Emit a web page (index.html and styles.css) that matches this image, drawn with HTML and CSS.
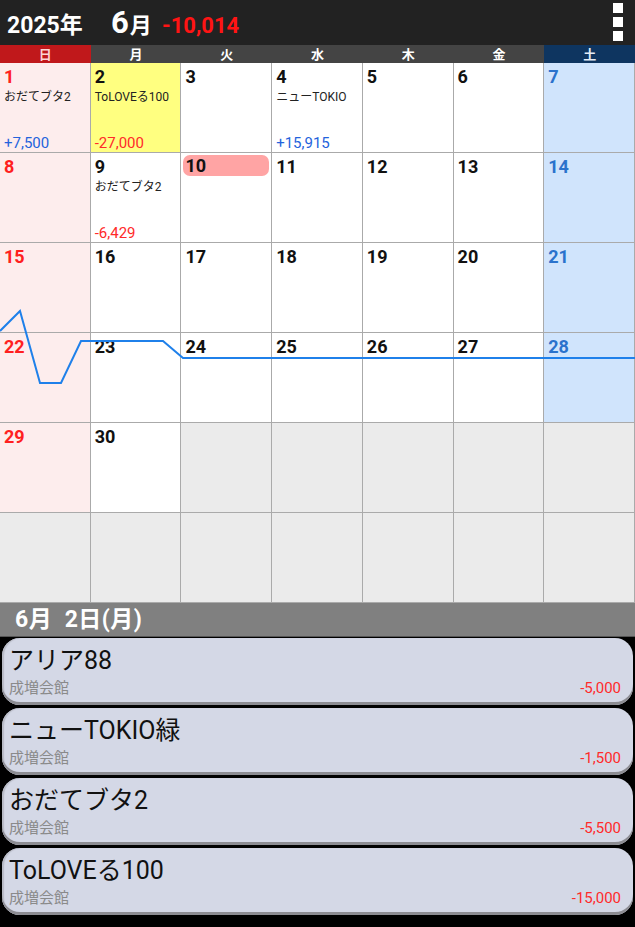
FILE: index.html
```html
<!DOCTYPE html>
<html lang="ja">
<head>
<meta charset="utf-8">
<link rel="stylesheet" href="styles.css">
</head>
<body>
<div class="app">
  <header class="topbar">
    <span class="year">2025年</span>
    <span class="month"><span class="mnum">6</span>月</span>
    <span class="total">-10,014</span>
    <div class="menu"><i></i><i></i><i></i></div>
  </header>
  <div class="weekdays">
    <div class="wd sun">日</div><div class="wd">月</div><div class="wd">火</div><div class="wd">水</div><div class="wd">木</div><div class="wd">金</div><div class="wd sat">土</div>
  </div>
  <div class="cal">
    <div class="cell sun"><span class="num">1</span><span class="ev">おだてブタ2</span><span class="amt plus">+7,500</span></div>
    <div class="cell sel"><span class="num">2</span><span class="ev">ToLOVEる100</span><span class="amt minus">-27,000</span></div>
    <div class="cell"><span class="num">3</span></div>
    <div class="cell"><span class="num">4</span><span class="ev">ニューTOKIO</span><span class="amt plus">+15,915</span></div>
    <div class="cell"><span class="num">5</span></div>
    <div class="cell"><span class="num">6</span></div>
    <div class="cell sat"><span class="num">7</span></div>

    <div class="cell sun"><span class="num">8</span></div>
    <div class="cell"><span class="num">9</span><span class="ev">おだてブタ2</span><span class="amt minus">-6,429</span></div>
    <div class="cell"><span class="num today">10</span></div>
    <div class="cell"><span class="num">11</span></div>
    <div class="cell"><span class="num">12</span></div>
    <div class="cell"><span class="num">13</span></div>
    <div class="cell sat"><span class="num">14</span></div>

    <div class="cell sun"><span class="num">15</span></div>
    <div class="cell"><span class="num">16</span></div>
    <div class="cell"><span class="num">17</span></div>
    <div class="cell"><span class="num">18</span></div>
    <div class="cell"><span class="num">19</span></div>
    <div class="cell"><span class="num">20</span></div>
    <div class="cell sat"><span class="num">21</span></div>

    <div class="cell sun"><span class="num">22</span></div>
    <div class="cell"><span class="num">23</span></div>
    <div class="cell"><span class="num">24</span></div>
    <div class="cell"><span class="num">25</span></div>
    <div class="cell"><span class="num">26</span></div>
    <div class="cell"><span class="num">27</span></div>
    <div class="cell sat"><span class="num">28</span></div>

    <div class="cell sun"><span class="num">29</span></div>
    <div class="cell"><span class="num">30</span></div>
    <div class="cell empty"></div>
    <div class="cell empty"></div>
    <div class="cell empty"></div>
    <div class="cell empty"></div>
    <div class="cell empty"></div>

    <div class="cell empty"></div>
    <div class="cell empty"></div>
    <div class="cell empty"></div>
    <div class="cell empty"></div>
    <div class="cell empty"></div>
    <div class="cell empty"></div>
    <div class="cell empty"></div>

    <svg class="chart" width="635" height="540" viewBox="0 0 635 540">
      <polyline points="0,268 20,248 40,320 61,320 81,278 163,278 183,295 635,295" fill="none" stroke="#1f80ea" stroke-width="2" stroke-linejoin="miter"/>
    </svg>
  </div>
  <div class="datebar">6月&nbsp;&nbsp;2日(月)</div>
  <div class="list">
    <div class="item"><div class="title">アリア88</div><div class="sub"><span>成増会館</span><span class="iamt">-5,000</span></div></div>
    <div class="item"><div class="title">ニューTOKIO緑</div><div class="sub"><span>成増会館</span><span class="iamt">-1,500</span></div></div>
    <div class="item"><div class="title">おだてブタ2</div><div class="sub"><span>成増会館</span><span class="iamt">-5,500</span></div></div>
    <div class="item"><div class="title">ToLOVEる100</div><div class="sub"><span>成増会館</span><span class="iamt">-15,000</span></div></div>
  </div>
</div>
</body>
</html>
```

FILE: styles.css
```css
* { box-sizing: border-box; margin: 0; padding: 0; }
html, body { background: #000; }
body {
  width: 635px;
  height: 927px;
  overflow: hidden;
  font-family: "Roboto", "Noto Sans CJK JP", sans-serif;
}
.app { display: flex; flex-direction: column; width: 635px; }

.topbar {
  height: 45px;
  background: #222222;
  display: flex;
  align-items: baseline;
  padding: 0 0 0 7px;
  position: relative;
  color: #fff;
  font-weight: bold;
}
.year { font-size: 23px; line-height: 45px; width: 104px; padding-top: 3px; }
.month { font-size: 22px; line-height: 45px; width: 51px; }
.mnum { font-size: 31px; margin-right: 1px; }
.total { color: #ff1414; font-size: 22px; line-height: 45px; padding-top: 3px; }
.menu {
  position: absolute;
  right: 12px;
  top: 3px;
  display: flex;
  flex-direction: column;
  gap: 4px;
}
.menu i { display: block; width: 10px; height: 10px; background: #fff; }

.weekdays {
  display: grid;
  grid-template-columns: repeat(7, 1fr);
  height: 18px;
  background: #444444;
}
.wd {
  color: #fff;
  font-size: 13px;
  font-weight: bold;
  text-align: center;
  line-height: 18px;
  font-family: "Noto Sans CJK JP", sans-serif;
}
.wd.sun { background: #c0181b; color: #fcd4d4; }
.wd.sat { background: #0e3560; color: #e4ecf6; }

.cal {
  position: relative;
  display: grid;
  grid-template-columns: repeat(7, 1fr);
  grid-auto-rows: 90px;
  background: #fff;
}
.cell {
  background: #fff;
  border-right: 1px solid #aaaaaa;
  border-bottom: 1px solid #aaaaaa;
  display: flex;
  flex-direction: column;
  padding: 4px 0 0 4px;
  overflow: hidden;
}
.cell.sun { background: #fdeded; }
.cell.sat { background: #d0e4fc; }
.cell.sel { background: #ffff80; }
.cell.empty { background: #ebebeb; }
.num {
  font-size: 18px;
  font-weight: bold;
  color: #111;
  line-height: 20px;
  height: 20px;
}
.cell.sun .num { color: #ff2020; }
.cell.sat .num { color: #2a72cc; }
.num.today {
  background: #ffa4a4;
  border-radius: 7px;
  margin-left: -2px;
  margin-right: 2px;
  padding-left: 2px;
  height: 21px;
  line-height: 21px;
  margin-top: -2px;
}
.ev {
  font-size: 12px;
  color: #222;
  line-height: 16px;
  margin-top: 2px;
  white-space: nowrap;
}
.amt {
  margin-top: auto;
  font-size: 15px;
  line-height: 18px;
  padding-bottom: 0;
}
.amt.plus { color: #2463dc; }
.amt.minus { color: #ff2a2a; }
.chart {
  position: absolute;
  left: 0;
  top: 0;
  pointer-events: none;
}

.datebar {
  height: 34px;
  background: #808080;
  color: #fff;
  font-weight: bold;
  font-size: 23px;
  line-height: 34px;
  padding-left: 15px;
  letter-spacing: 0.5px;
  border-bottom: 1px solid #555;
}
.list {
  display: flex;
  flex-direction: column;
  gap: 3px;
  padding: 1px 2px 0 2px;
}
.item {
  height: 67px;
  background: #d4d8e6;
  border-radius: 18px;
  box-shadow: inset 0 -3px 0 #8c8c92, inset 2px 0 1px #b8bbc6;
  padding: 8px 12px 0 7px;
  display: flex;
  flex-direction: column;
}
.title {
  font-size: 25px;
  line-height: 30px;
  color: #111;
}
.sub {
  display: flex;
  justify-content: space-between;
  font-size: 15px;
  line-height: 18px;
  color: #8a8a8a;
  margin-top: 3px;
}
.iamt { color: #ff2a2a; }
```
